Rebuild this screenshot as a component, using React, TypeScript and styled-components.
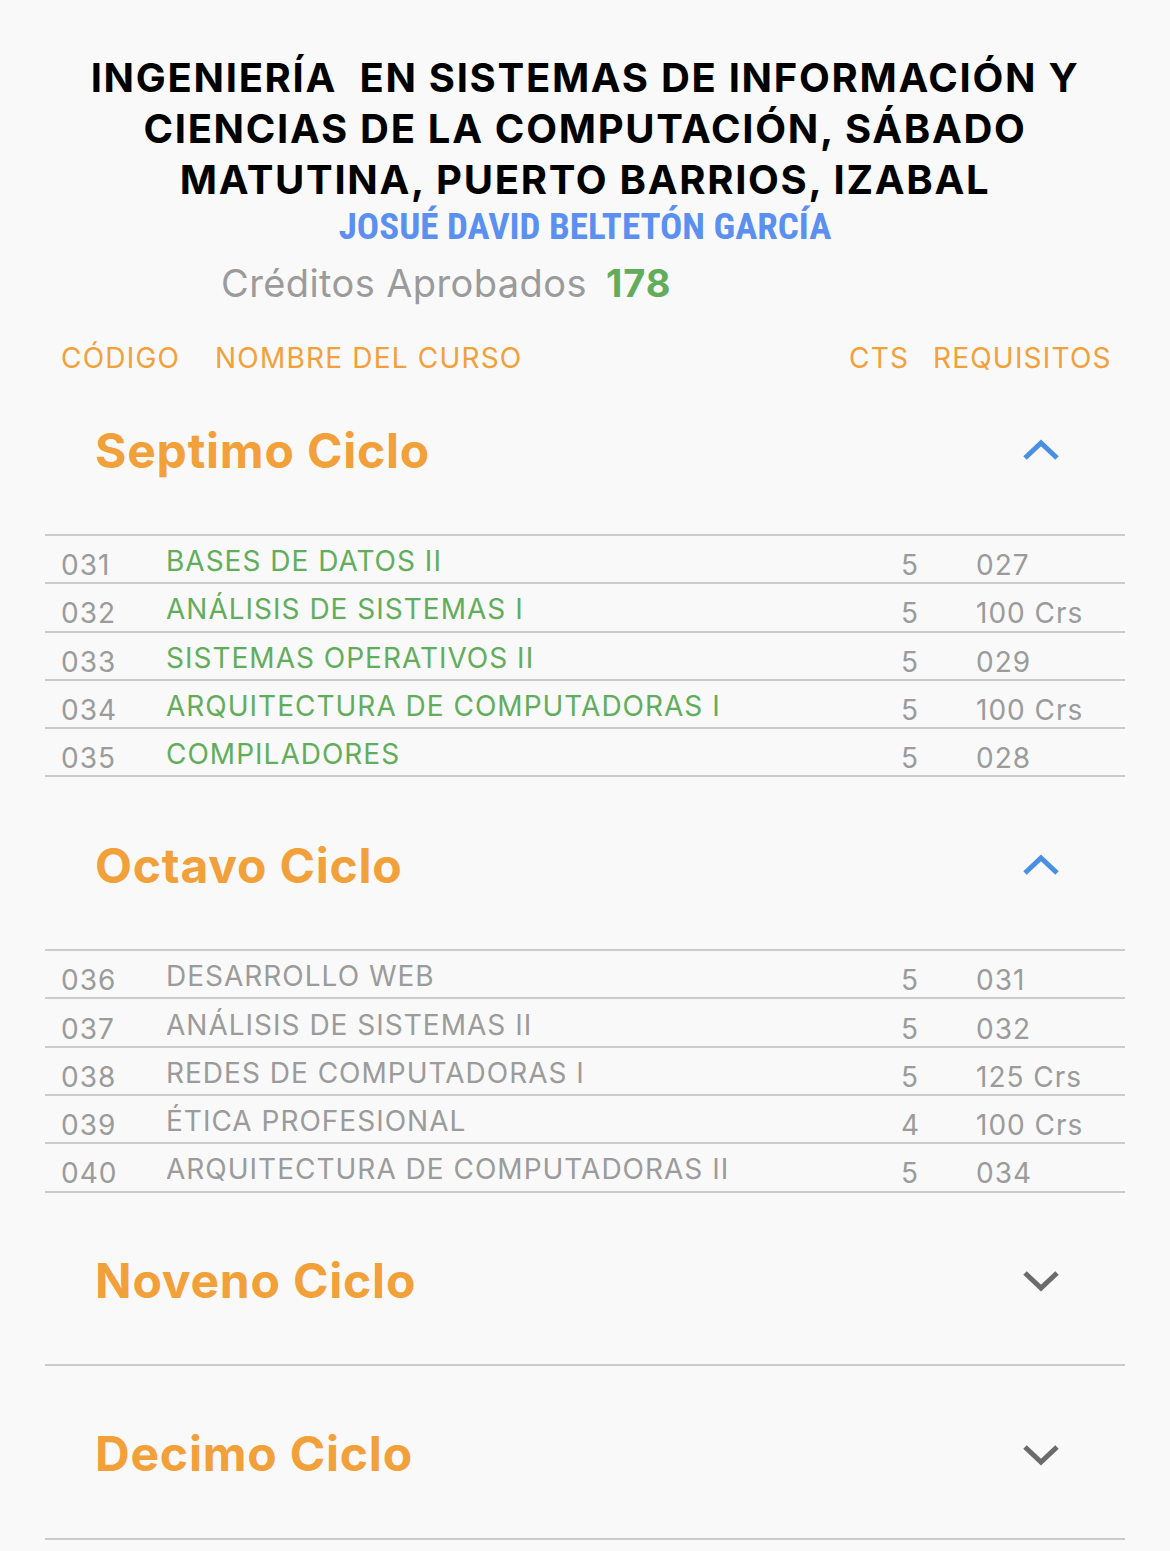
import React from "react";
import styled, { createGlobalStyle } from "styled-components";

const GlobalStyle = createGlobalStyle`
  html, body { margin: 0; padding: 0; background: #f9f9f9; }
  body { font-family: Inter, "Noto Sans", sans-serif; }
`;

const Page = styled.div`
  width: 1170px;
  min-height: 1551px;
  background: #f9f9f9;
  padding-top: 52px;
  box-sizing: border-box;
`;

const Title = styled.h1`
  margin: 0 auto;
  width: 1160px;
  text-align: center;
  font-family: Inter, sans-serif;
  font-weight: 700;
  font-size: 40px;
  line-height: 51px;
  letter-spacing: 1.7px;
  color: #000;
`;

const Student = styled.div`
  text-align: center;
  font-family: "Liberation Sans Narrow", "Roboto Condensed", Roboto, sans-serif;
  font-weight: 700;
  font-size: 37px;
  line-height: 44px;
  color: #5b8ff0;
`;

const Credits = styled.div`
  display: flex;
  align-items: baseline;
  gap: 19px;
  padding-left: 221px;
  margin-top: 12px;
  height: 44px;
  line-height: 44px;
  font-family: Inter, sans-serif;
  font-size: 38px;
  letter-spacing: 0.4px;
  color: #9b9b9b;
`;

const CreditValue = styled.span`
  font-weight: 700;
  letter-spacing: 1px;
  color: #62ad5c;
`;

const ColumnHeader = styled.div`
  position: relative;
  height: 46px;
  margin-top: 30px;
  font-family: Inter, sans-serif;
  font-size: 28px;
  line-height: 46px;
  letter-spacing: 1.2px;
  color: #f2a03a;
`;

const HeadCell = styled.span<{ $left: number }>`
  position: absolute;
  top: 0;
  left: ${(p) => p.$left}px;
  white-space: nowrap;
`;

const List = styled.div`
  margin: 0 45px;
`;

const Section = styled.section`
  & + & {
    margin-top: 18.6px;
  }
`;

const SectionHeader = styled.div`
  display: flex;
  align-items: center;
  justify-content: space-between;
  height: 138px;
  padding: 0 64px 15px 50px;
  border-bottom: 2px solid #cbcbcb;
`;

const SectionTitle = styled.h2`
  margin: 0;
  font-family: Inter, sans-serif;
  font-weight: 700;
  font-size: 48px;
  letter-spacing: 0.8px;
  color: #f2a03a;
`;

const Row = styled.div`
  display: grid;
  grid-template-columns: 105px 735px 75px 1fr;
  align-items: center;
  height: 46.3px;
  padding-left: 16px;
  border-bottom: 2px solid #cbcbcb;
  font-family: Inter, sans-serif;
  font-size: 28px;
  letter-spacing: 1px;
  color: #9b9b9b;
  white-space: nowrap;
`;

const Cell = styled.span`
  padding-top: 12px;
`;

const CourseName = styled.span<{ $done: boolean }>`
  padding-top: 4px;
  color: ${(p) => (p.$done ? "#62ad5c" : "#9b9b9b")};
`;

const Chevron = ({ open }: { open: boolean }) => (
  <svg width="40" height="24" viewBox="0 0 40 24">
    <polyline
      points={open ? "4,20 20,5 36,20" : "4,5 20,20 36,5"}
      fill="none"
      stroke={open ? "#4a90e2" : "#6b6b6b"}
      strokeWidth="5"
      strokeLinecap="butt"
      strokeLinejoin="miter"
    />
  </svg>
);

type Course = { code: string; name: string; cts: string; req: string };
type Cycle = { title: string; open: boolean; done: boolean; courses: Course[] };

const cycles: Cycle[] = [
  {
    title: "Septimo Ciclo",
    open: true,
    done: true,
    courses: [
      { code: "031", name: "BASES DE DATOS II", cts: "5", req: "027" },
      { code: "032", name: "ANÁLISIS DE SISTEMAS I", cts: "5", req: "100 Crs" },
      { code: "033", name: "SISTEMAS OPERATIVOS II", cts: "5", req: "029" },
      { code: "034", name: "ARQUITECTURA DE COMPUTADORAS I", cts: "5", req: "100 Crs" },
      { code: "035", name: "COMPILADORES", cts: "5", req: "028" },
    ],
  },
  {
    title: "Octavo Ciclo",
    open: true,
    done: false,
    courses: [
      { code: "036", name: "DESARROLLO WEB", cts: "5", req: "031" },
      { code: "037", name: "ANÁLISIS DE SISTEMAS II", cts: "5", req: "032" },
      { code: "038", name: "REDES DE COMPUTADORAS I", cts: "5", req: "125 Crs" },
      { code: "039", name: "ÉTICA PROFESIONAL", cts: "4", req: "100 Crs" },
      { code: "040", name: "ARQUITECTURA DE COMPUTADORAS II", cts: "5", req: "034" },
    ],
  },
  { title: "Noveno Ciclo", open: false, done: false, courses: [] },
  { title: "Decimo Ciclo", open: false, done: false, courses: [] },
];

export default function App() {
  return (
    <>
      <GlobalStyle />
      <Page>
        <Title>
          INGENIERÍA&nbsp; EN SISTEMAS DE INFORMACIÓN Y<br />
          CIENCIAS DE LA COMPUTACIÓN, SÁBADO<br />
          MATUTINA, PUERTO BARRIOS, IZABAL
        </Title>
        <Student>JOSUÉ DAVID BELTETÓN GARCÍA</Student>
        <Credits>
          <span>Créditos Aprobados</span>
          <CreditValue>178</CreditValue>
        </Credits>
        <ColumnHeader>
          <HeadCell $left={61}>CÓDIGO</HeadCell>
          <HeadCell $left={215}>NOMBRE DEL CURSO</HeadCell>
          <HeadCell $left={849}>CTS</HeadCell>
          <HeadCell $left={933}>REQUISITOS</HeadCell>
        </ColumnHeader>
        <List>
          {cycles.map((c) => (
            <Section key={c.title}>
              <SectionHeader>
                <SectionTitle>{c.title}</SectionTitle>
                <Chevron open={c.open} />
              </SectionHeader>
              {c.open &&
                c.courses.map((r) => (
                  <Row key={r.code}>
                    <Cell>{r.code}</Cell>
                    <CourseName $done={c.done}>{r.name}</CourseName>
                    <Cell>{r.cts}</Cell>
                    <Cell>{r.req}</Cell>
                  </Row>
                ))}
            </Section>
          ))}
        </List>
      </Page>
    </>
  );
}
